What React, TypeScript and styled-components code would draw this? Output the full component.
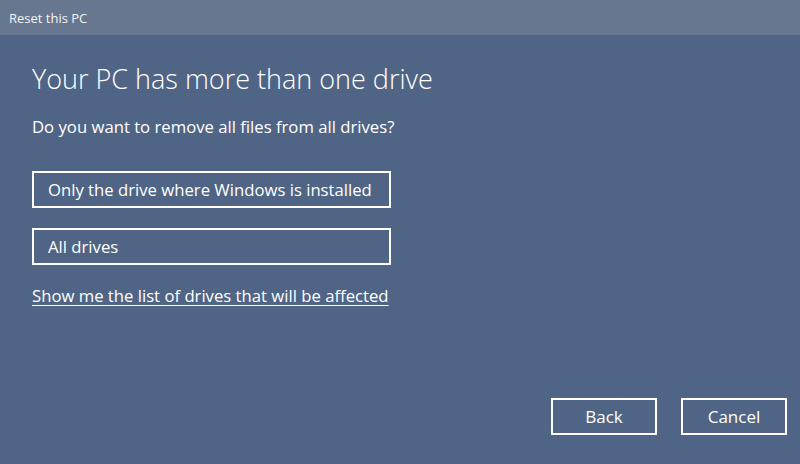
import { createGlobalStyle, styled } from "styled-components";

const GlobalStyle = createGlobalStyle`
  html, body {
    margin: 0;
    padding: 0;
    background: #506586;
  }
  body {
    font-family: "Open Sans", "Liberation Sans", sans-serif;
    color: #ffffff;
  }
`;

const App = () => {
  return (
    <Window>
      <GlobalStyle />
      <TitleBar>Reset this PC</TitleBar>
      <Body>
        <Heading>Your PC has more than one drive</Heading>
        <Question>Do you want to remove all files from all drives?</Question>
        <Options>
          <Option>Only the drive where Windows is installed</Option>
          <Option>All drives</Option>
        </Options>
        <Link href="#">Show me the list of drives that will be affected</Link>
        <Footer>
          <ActionButton>Back</ActionButton>
          <ActionButton>Cancel</ActionButton>
        </Footer>
      </Body>
    </Window>
  );
};

export default App;

const Window = styled.div`
  width: 800px;
  height: 464px;
  display: flex;
  flex-direction: column;
  background: #506586;
  overflow: hidden;
`;

const TitleBar = styled.div`
  height: 35px;
  display: flex;
  align-items: center;
  padding-left: 9px;
  background: #67778f;
  font-size: 13px;
  color: #f2f4f7;
`;

const Body = styled.div`
  flex: 1;
  display: flex;
  flex-direction: column;
  padding: 0 13px 0 32px;
`;

const Heading = styled.h1`
  margin: 26px 0 0;
  font-size: 27px;
  font-weight: 300;
  line-height: 36px;
`;

const Question = styled.p`
  margin: 19px 0 0;
  font-size: 16.7px;
  line-height: 22px;
`;

const Options = styled.div`
  display: flex;
  flex-direction: column;
  gap: 20px;
  margin-top: 33px;
`;

const Option = styled.button`
  width: 359px;
  height: 37px;
  box-sizing: border-box;
  border: 2px solid #ffffff;
  background: transparent;
  color: #ffffff;
  text-align: left;
  padding: 0 14px;
  font-family: inherit;
  font-size: 16.7px;
`;

const Link = styled.a`
  align-self: flex-start;
  margin-top: 20px;
  font-size: 16.7px;
  line-height: 22px;
  color: #ffffff;
  text-decoration: underline;
  text-underline-offset: 3px;
`;

const Footer = styled.div`
  margin-top: auto;
  margin-bottom: 29px;
  display: flex;
  justify-content: flex-end;
  gap: 24px;
`;

const ActionButton = styled.button`
  width: 106px;
  height: 37px;
  box-sizing: border-box;
  border: 2px solid #ffffff;
  background: transparent;
  color: #ffffff;
  font-family: inherit;
  font-size: 17px;
`;
